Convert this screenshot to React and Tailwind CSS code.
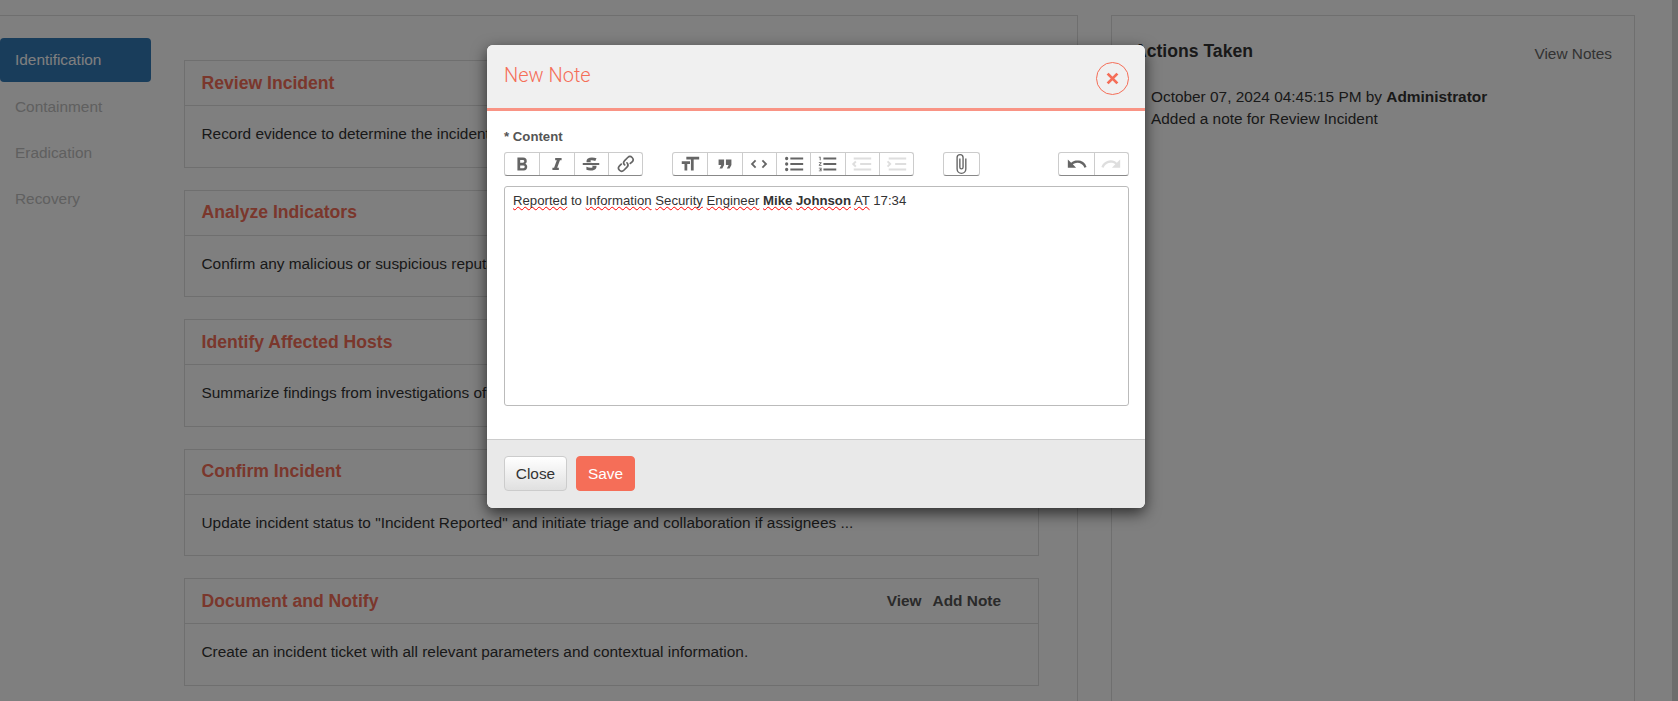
import React from "react";

const font = "font-['Liberation_Sans',Arial,sans-serif]";

const icons = {
  bold: "M15.6 11.8c1-.7 1.6-1.8 1.6-2.8a4 4 0 0 0-4-4H7v14h7c2.1 0 3.7-1.7 3.7-3.8 0-1.5-.8-2.8-2.1-3.4zM10 7.5h3a1.5 1.5 0 1 1 0 3h-3v-3zm3.5 9H10v-3h3.5a1.5 1.5 0 1 1 0 3z",
  italic: "M10 5.5V8h1.8l-3 8H7v2.5h7V16h-1.8l3-8H17V5.5z",
  strike: "M12.73 14l.28.14c.26.15.45.3.57.44.12.14.18.3.18.5 0 .3-.15.56-.44.75-.3.2-.76.3-1.39.3A13.52 13.52 0 0 1 7 14.95v3.37a10.64 10.64 0 0 0 4.84.88c1.26 0 2.35-.19 3.28-.56.93-.37 1.64-.9 2.14-1.57s.74-1.45.74-2.32c0-.26-.02-.51-.06-.75h-5.21zm-5.5-4c-.08-.34-.12-.7-.12-1.1 0-1.29.52-2.3 1.58-3.02 1.05-.72 2.5-1.08 4.34-1.08 1.62 0 3.28.34 4.97 1l-1.3 2.93c-1.47-.6-2.73-.9-3.8-.9-.55 0-.96.08-1.2.26-.26.17-.38.38-.38.64 0 .27.16.52.48.74.17.12.53.3 1.05.53H7.23zM3 13h18v-2H3v2z",
  link: "M9.88 13.7a4.3 4.3 0 0 1 0-6.07l3.37-3.37a4.26 4.26 0 0 1 6.07 0 4.3 4.3 0 0 1 0 6.06l-1.96 1.72a.91.91 0 1 1-1.3-1.3l1.97-1.71a2.46 2.46 0 0 0-3.48-3.48l-3.38 3.37a2.46 2.46 0 0 0 0 3.48.91.91 0 1 1-1.3 1.3z M4.25 19.46a4.3 4.3 0 0 1 0-6.07l1.93-1.9a.91.91 0 1 1 1.3 1.3l-1.93 1.9a2.46 2.46 0 0 0 3.48 3.48l3.37-3.38c.96-.96.96-2.52 0-3.48a.91.91 0 1 1 1.3-1.3 4.3 4.3 0 0 1 0 6.07l-3.38 3.38a4.26 4.26 0 0 1-6.07 0z",
  heading: "M12 9v3H9v7H6v-7H3V9h9zM8 4h14v3h-6v12h-3V7H8V4z",
  quote: "M6 17h3l2-4V7H5v6h3zm8 0h3l2-4V7h-6v6h3z",
  code: "M18.2 12L15 15.2l1.4 1.4L21 12l-4.6-4.6L15 8.8l3.2 3.2zM5.8 12L9 8.8 7.6 7.4 3 12l4.6 4.6L9 15.2 5.8 12z",
  bullets: "M4 4.2a1.8 1.8 0 1 0 0 3.6 1.8 1.8 0 0 0 0-3.6zm0 6a1.8 1.8 0 1 0 0 3.6 1.8 1.8 0 0 0 0-3.6zm0 6a1.8 1.8 0 1 0 0 3.6 1.8 1.8 0 0 0 0-3.6zm4 2.8h14v-2H8v2zm0-6h14v-2H8v2zm0-8v2h14V5H8z",
  numbers: "M2 17h2v.5H3v1h1v.5H2v1h3v-4H2v1zm1-9h1V4H2v1h1v3zm-1 3h1.8L2 13.1v.9h3v-1H3.2L5 10.9V10H2v1zm5-6v2h14V5H7zm0 14h14v-2H7v2zm0-6h14v-2H7v2z",
  outdent: "M3 19h19v-2H3v2zm7-6h12v-2H10v2zm-8.3-.3l2.8 2.9L6 14.2 4 12l2-2-1.4-1.5L1 12l.7.7zM3 5v2h19V5H3z",
  indent: "M3 19h19v-2H3v2zm7-6h12v-2H10v2zm-6.9-1L1 14.2l1.4 1.4L6 12l-.7-.7-2.9-2.9L1 9.8 3.1 12zM3 5v2h19V5H3z",
  attach: "M16.5 6v11.5a4 4 0 1 1-8 0V5a2.5 2.5 0 0 1 5 0v10.5a1 1 0 1 1-2 0V6H10v9.5a2.5 2.5 0 0 0 5 0V5a4 4 0 1 0-8 0v12.5a5.5 5.5 0 0 0 11 0V6h-1.5z",
  undo: "M12.5 8c-2.6 0-5 1-6.9 2.6L2 7v9h9l-3.6-3.6A8 8 0 0 1 20 16l2.4-.8a10.5 10.5 0 0 0-10-7.2z",
  redo: "M18.4 10.6a10.5 10.5 0 0 0-16.9 4.6L4 16a8 8 0 0 1 12.7-3.6L13 16h9V7l-3.6 3.6z",
};

const sections = [
  { title: "Review Incident", text: "Record evidence to determine the incident's scope and severity based on available data." },
  { title: "Analyze Indicators", text: "Confirm any malicious or suspicious reputation of the indicators related to this incident." },
  { title: "Identify Affected Hosts", text: "Summarize findings from investigations of the hosts affected by this incident." },
  { title: "Confirm Incident", text: 'Update incident status to "Incident Reported" and initiate triage and collaboration if assignees ...' },
  { title: "Document and Notify", text: "Create an incident ticket with all relevant parameters and contextual information." },
];

const ToolButton = ({ name, disabled }) => (
  <button className="flex h-[22px] w-[34.3px] items-center justify-center border-l border-[#ccc] first:border-l-0">
    <svg
      viewBox="0 0 24 24"
      className={`h-[22px] w-[22px] ${disabled ? "opacity-[0.125]" : "opacity-60"}`}
      fill="#000"
      fillRule="evenodd"
    >
      <path d={icons[name]} />
    </svg>
  </button>
);

const ToolGroup = ({ children }) => (
  <div className="flex rounded-[3px] border border-[#ccc] border-b-[#888] bg-white">{children}</div>
);

const Squiggle = ({ children }) => (
  <span className="underline decoration-[#ff0000] decoration-wavy decoration-1 underline-offset-1 [text-decoration-skip-ink:none]">{children}</span>
);

const Section = ({ title, text }) => (
  <div className="border border-[#dedede]">
    <div className="flex h-[45px] items-center justify-between border-b border-[#dedede] pl-[16.5px] pr-[37px]">
      <h3 className="text-[17.6px] font-bold text-[#f56e58]">{title}</h3>
      <div className="flex gap-[11px] text-[15.4px] font-bold text-[#555]">
        <span>View</span>
        <span>Add Note</span>
      </div>
    </div>
    <p className="h-[60.5px] truncate pl-[16.5px] pr-[37px] pt-[17px] text-[15.4px] leading-[21px] text-[#333]">{text}</p>
  </div>
);

export default function App() {
  return (
    <div className={`relative h-[701px] overflow-hidden bg-white ${font}`}>
      {/* Page behind the dialog */}
      <div className="flex h-full">
        <div className="flex min-w-0 flex-1 pt-[15px]">
          <div className="flex w-[1078px] shrink-0 border-r border-t border-[#dedede]">
            <nav className="w-[151px] shrink-0 pt-[22px] text-[15.4px]">
              <div className="mb-[1.5px] flex h-11 items-center rounded-[4px] bg-[#337ab7] pl-[15px] text-white">Identification</div>
              <div className="flex h-[46px] items-center pl-[15px] text-[#c0c0c0]">Containment</div>
              <div className="flex h-[46px] items-center pl-[15px] text-[#c0c0c0]">Eradication</div>
              <div className="flex h-[46px] items-center pl-[15px] text-[#c0c0c0]">Recovery</div>
            </nav>
            <div className="ml-[33px] mr-[38px] flex min-w-0 flex-1 flex-col gap-[22px] pt-[44px]">
              {sections.map((s) => (
                <Section key={s.title} title={s.title} text={s.text} />
              ))}
            </div>
          </div>
          <div className="ml-[33px] w-[524px] shrink-0 border border-b-0 border-[#dedede] pl-[22px] pr-[22px] pt-[22.5px]">
            <div className="flex items-start justify-between">
              <h3 className="text-[17.6px] font-bold leading-[24px] text-[#333]">Actions Taken</h3>
              <span className="pt-[4.5px] text-[15.4px] leading-[21px] text-[#666]">View Notes</span>
            </div>
            <div className="pl-[17px] pt-[21.5px] text-[15.4px] leading-[22.5px] text-[#333]">
              <div>
                October 07, 2024 04:45:15 PM by <b>Administrator</b>
              </div>
              <div>Added a note for Review Incident</div>
            </div>
          </div>
        </div>
        <div className="w-[6px] shrink-0 bg-[#dadada]" />
      </div>

      {/* Dialog */}
      <div className="absolute inset-0 bg-black/50 pl-[487px] pt-[45px]">
        <div className="w-[658px] overflow-hidden rounded-[6px] bg-white shadow-[0_5px_15px_rgba(0,0,0,0.65)]">
          <div className="flex h-[66px] items-start justify-between border-b-[3px] border-[#f99485] bg-[#f0f0f0] pl-[17px] pr-[16px]">
            <h4 className="pt-[15px] font-['Roboto',sans-serif] text-[20px] font-light leading-[30px] text-[#f56e58]">New Note</h4>
            <button className="mt-[17px] flex h-[33px] w-[33px] items-center justify-center rounded-full border border-[#f56e58]">
              <svg viewBox="0 0 12 12" className="h-[13px] w-[13px]" stroke="#f56e58" strokeWidth="2.6">
                <path d="M1.5 1.5l9 9M10.5 1.5l-9 9" />
              </svg>
            </button>
          </div>

          <div className="h-[328px] pl-[17px] pr-[16px] pt-[17px]">
            <label className="block text-[13.2px] font-bold leading-[17px] text-[#555]">* Content</label>
            <div className="mt-[7px] flex">
              <ToolGroup>
                <ToolButton name="bold" />
                <ToolButton name="italic" />
                <ToolButton name="strike" />
                <ToolButton name="link" />
              </ToolGroup>
              <div className="ml-[29px]">
                <ToolGroup>
                  <ToolButton name="heading" />
                  <ToolButton name="quote" />
                  <ToolButton name="code" />
                  <ToolButton name="bullets" />
                  <ToolButton name="numbers" />
                  <ToolButton name="outdent" disabled />
                  <ToolButton name="indent" disabled />
                </ToolGroup>
              </div>
              <div className="ml-[29px]">
                <ToolGroup>
                  <ToolButton name="attach" />
                </ToolGroup>
              </div>
              <div className="ml-auto">
                <ToolGroup>
                  <ToolButton name="undo" />
                  <ToolButton name="redo" disabled />
                </ToolGroup>
              </div>
            </div>
            <div className="mt-[10px] h-[220px] rounded-[3px] border border-[#bbb] px-[8px] pt-[5px] text-[13.2px] leading-[17px] text-[#333]">
              <Squiggle>Reported</Squiggle> to <Squiggle>Information</Squiggle> <Squiggle>Security</Squiggle>{" "}
              <Squiggle>Engineer</Squiggle>{" "}
              <b>
                <Squiggle>Mike</Squiggle> <Squiggle>Johnson</Squiggle>
              </b>{" "}
              <Squiggle>AT</Squiggle> 17:34
            </div>
          </div>

          <div className="flex h-[69px] gap-[9px] border-t border-[#ccc] bg-[#e9e9e9] pl-[17px] pt-[16px]">
            <button className="h-[35px] w-[63px] rounded-[4px] border border-[#ccc] bg-gradient-to-b from-white to-[#e0e0e0] text-[15.4px] text-[#333]">Close</button>
            <button className="h-[35px] w-[59px] rounded-[4px] border border-[#f56e58] bg-[#f56e58] text-[15.4px] text-white">Save</button>
          </div>
        </div>
      </div>
    </div>
  );
}
